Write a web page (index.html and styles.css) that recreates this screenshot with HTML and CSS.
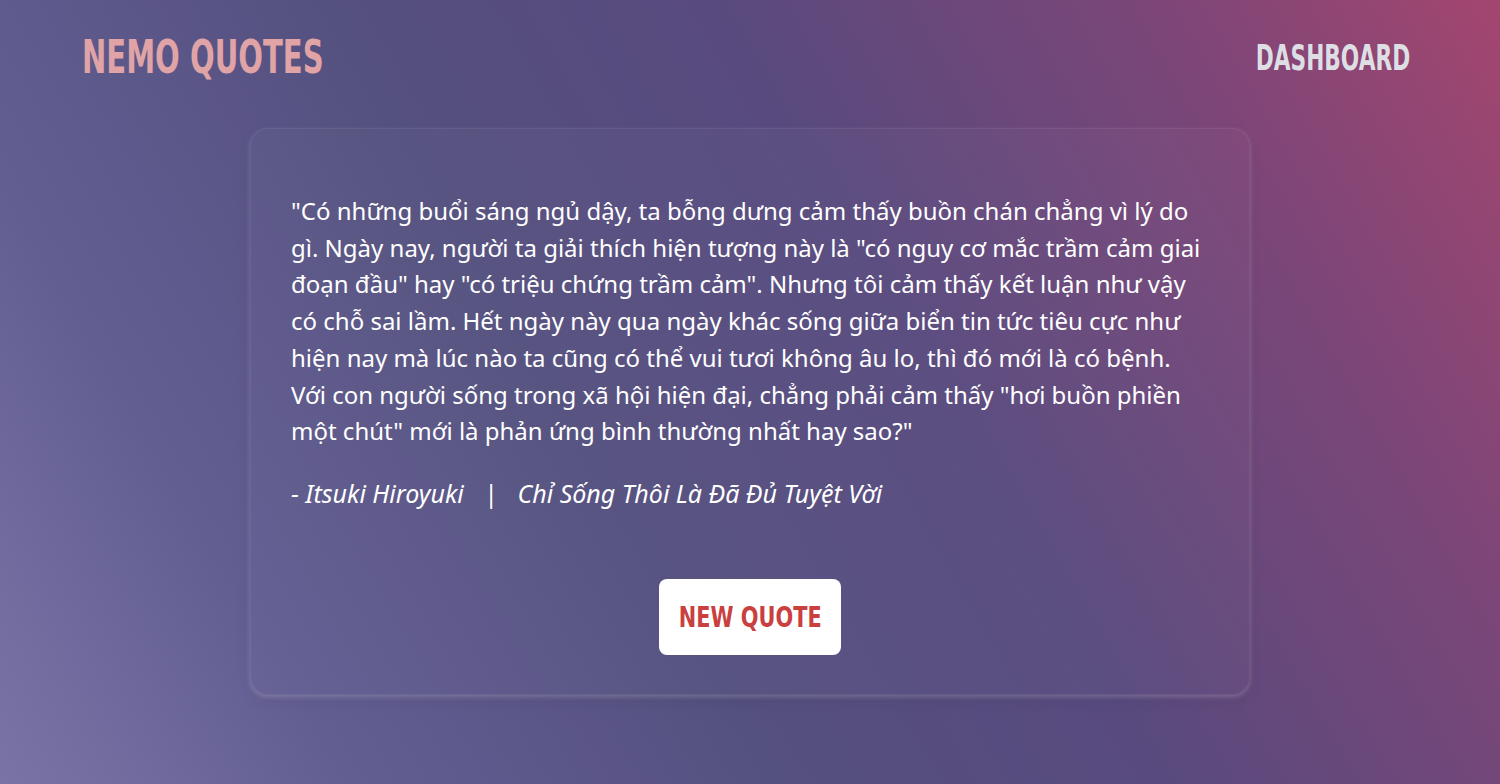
FILE: index.html
```html
<!DOCTYPE html>
<html lang="vi">
<head>
<meta charset="utf-8">
<title>Nemo Quotes</title>
<link rel="stylesheet" href="styles.css">
</head>
<body>
<div class="page">
  <header class="topbar">
    <div class="logo"><span class="squeeze squeeze-left">NEMO QUOTES</span></div>
    <a class="nav" href="#"><span class="squeeze squeeze-right">DASHBOARD</span></a>
  </header>
  <main class="card">
    <p class="quote">"Có những buổi sáng ngủ dậy, ta bỗng dưng cảm thấy buồn chán chẳng vì lý do gì. Ngày nay, người ta giải thích hiện tượng này là "có nguy cơ mắc trầm cảm giai đoạn đầu" hay "có triệu chứng trầm cảm". Nhưng tôi cảm thấy kết luận như vậy có chỗ sai lầm. Hết ngày này qua ngày khác sống giữa biển tin tức tiêu cực như hiện nay mà lúc nào ta cũng có thể vui tươi không âu lo, thì đó mới là có bệnh. Với con người sống trong xã hội hiện đại, chẳng phải cảm thấy "hơi buồn phiền một chút" mới là phản ứng bình thường nhất hay sao?"</p>
    <p class="source"><span>- Itsuki Hiroyuki</span><span class="sep">|</span><span>Chỉ Sống Thôi Là Đã Đủ Tuyệt Vời</span></p>
    <div class="actions">
      <button class="btn" type="button"><span class="squeeze squeeze-center">NEW QUOTE</span></button>
    </div>
  </main>
</div>
</body>
</html>
```

FILE: styles.css
```css
html, body {
  margin: 0;
  padding: 0;
  height: 100%;
}
body {
  background: linear-gradient(60deg, #7a74a6 0%, #635e92 18%, #54507f 40%, #594a7e 60%, #7c4678 82%, #a3466f 100%);
  font-family: "Noto Sans", sans-serif;
  overflow: hidden;
}
.page {
  min-height: 784px;
  box-sizing: border-box;
  padding: 0 90px 0 82px;
}
.topbar {
  display: flex;
  justify-content: space-between;
  align-items: center;
  height: 114px;
}
.squeeze {
  display: inline-block;
  white-space: nowrap;
  flex: none;
}
.squeeze-left { transform-origin: left center; transform: scaleX(0.632); }
.squeeze-right { transform-origin: right center; transform: scaleX(0.62); }
.squeeze-center { transform-origin: center center; transform: scaleX(0.72); }
.logo {
  font-family: "DejaVu Sans", sans-serif;
  font-weight: 700;
  font-size: 46px;
  color: #e0a3a6;
}
.nav {
  font-family: "DejaVu Sans", sans-serif;
  font-weight: 700;
  font-size: 35px;
  color: #dedfe5;
  text-decoration: none;
  margin-top: 2px;
}
.card {
  width: 1000px;
  box-sizing: border-box;
  margin: 14px 0 0 168px;
  padding: 64px 40px 39px;
  border-radius: 18px;
  background: rgba(255, 255, 255, 0.025);
  border: 1px solid rgba(255, 255, 255, 0.06);
  box-shadow: 0 2px 5px rgba(255, 255, 255, 0.2), 0 6px 16px rgba(0, 0, 0, 0.06);
}
.quote {
  margin: 0;
  font-size: 24px;
  line-height: 36.7px;
  color: #ffffff;
}
.source {
  margin: 25px 0 0;
  font-family: "Noto Sans", sans-serif;
  font-style: italic;
  font-size: 25px;
  line-height: 36px;
  color: #ffffff;
  display: flex;
  gap: 20px;
}
.actions {
  display: flex;
  justify-content: center;
  margin-top: 68px;
}
.btn {
  width: 182px;
  height: 76px;
  padding: 0;
  border: none;
  border-radius: 8px;
  background: #ffffff;
  color: #c9403f;
  font-family: "DejaVu Sans", sans-serif;
  font-weight: 700;
  font-size: 29px;
  cursor: pointer;
  display: flex;
  justify-content: center;
  align-items: center;
  overflow: visible;
}
```
